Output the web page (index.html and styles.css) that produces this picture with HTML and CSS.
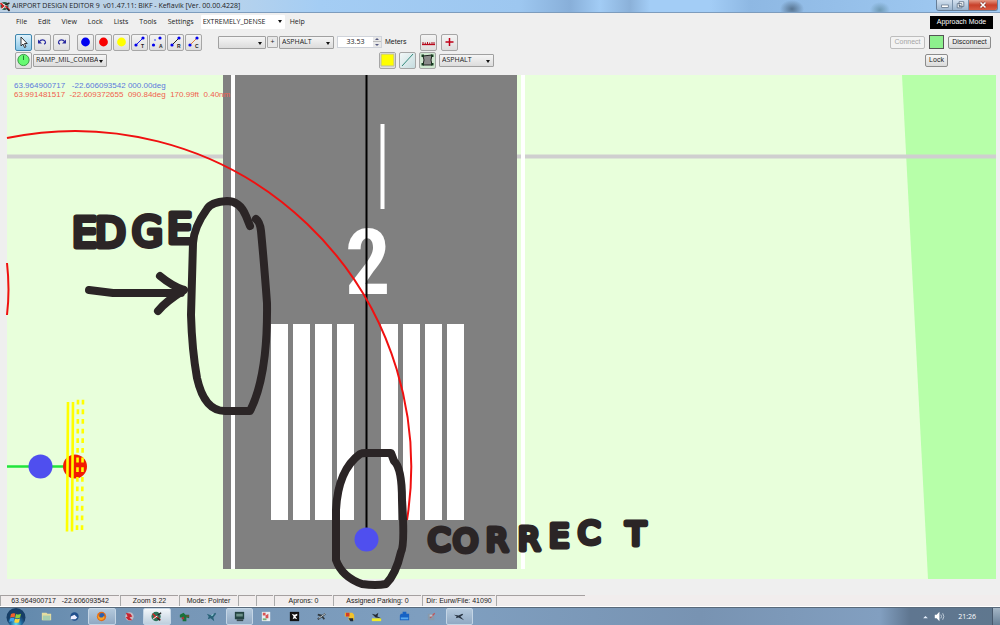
FILE: index.html
```html
<!DOCTYPE html>
<html lang="en">
<head>
<meta charset="utf-8">
<title>Airport Design Editor 9</title>
<link rel="stylesheet" href="styles.css">
</head>
<body>
<header class="titlebar">
  <svg class="app-icon" viewBox="0 0 11 11"><circle cx="4" cy="5" r="4" fill="#2b5d49"/><path d="M0 2l4 2 3 5M1 8l8-6" stroke="#fff" stroke-width="1.2"/><path d="M0 2l3 3-2 2M5 5l4 4" stroke="#d22" stroke-width="1.6" fill="none"/><path d="M5 4l4-2M6 7l3 3" stroke="#222" stroke-width="1.5"/></svg>
  <h1 class="title">AIRPORT DESIGN EDITOR 9 &nbsp;v01.47.11: BIKF - Keflavik [Ver. 00.00.4228]</h1>
  <div class="window-buttons">
    <button class="win" aria-label="Minimize"><svg viewBox="0 0 16 10"><rect x="5" y="5" width="7" height="2.500" fill="#fff" stroke="#52647a" stroke-width=".7"/></svg></button>
    <button class="win" aria-label="Restore"><svg viewBox="0 0 16 10"><path d="M6.500 1.500h5v5h-5zM4.500 3.500h5v4.500h-5z" fill="#fff" stroke="#52647a" stroke-width=".8"/><path d="M6.500 5h1.500v1.500H6.500z" fill="#52647a"/></svg></button>
    <button class="win close" aria-label="Close"><svg viewBox="0 0 16 10"><path d="M5.500 2.500l5 5m0-5l-5 5" stroke="#7a2a20" stroke-width="2.600"/><path d="M5.500 2.500l5 5m0-5l-5 5" stroke="#fff" stroke-width="1.600"/></svg></button>
  </div>
</header>

<nav class="menubar">
  <button class="menu">File</button>
  <button class="menu">Edit</button>
  <button class="menu">View</button>
  <button class="menu">Lock</button>
  <button class="menu">Lists</button>
  <button class="menu">Tools</button>
  <button class="menu">Settings</button>
  <span class="drop density"><select aria-label="Scenery density"><option>EXTREMELY_DENSE</option></select></span>
  <button class="menu help">Help</button>
  <button class="approach">Approach Mode</button>
</nav>

<section class="toolbar">
  <div class="row">
    <div class="group tools">
      <button class="tool active" aria-label="Pointer"><svg viewBox="0 0 17 18"><path d="M6 4v9l2-2 1.500 3.500 1.500-.7-1.500-3.300h2.700z" fill="#fff" stroke="#222" stroke-width=".9"/></svg></button>
      <button class="tool" aria-label="Undo"><svg viewBox="0 0 17 18"><path d="M5 9c2-3 6-2.500 6.500 0 .2 1.200-.7 2-1.500 2.200" fill="none" stroke="#2a2aa0" stroke-width="1.200"/><path d="M4 6.500v4h4z" fill="#2a2aa0"/></svg></button>
      <button class="tool" aria-label="Redo"><svg viewBox="0 0 17 18"><path d="M12 9c-2-3-6-2.500-6.500 0-.2 1.200.7 2 1.500 2.200" fill="none" stroke="#2a2aa0" stroke-width="1.200"/><path d="M13 6.500v4H9z" fill="#2a2aa0"/></svg></button>
    </div>
    <div class="group nodes">
      <button class="tool" aria-label="Blue node"><svg viewBox="0 0 17 18"><circle cx="8.500" cy="9" r="4.400" fill="#0000f0"/></svg></button>
      <button class="tool" aria-label="Red node"><svg viewBox="0 0 17 18"><circle cx="8.500" cy="9" r="4.400" fill="#f80000"/></svg></button>
      <button class="tool" aria-label="Yellow node"><svg viewBox="0 0 17 18"><circle cx="8.500" cy="9" r="4.400" fill="#ff0"/></svg></button>
      <button class="tool" aria-label="Taxi link"><svg viewBox="0 0 17 18"><path d="M5 12l7-7" stroke="#2222e0"/><g fill="#00e"><circle cx="5" cy="12" r="1.600"/><circle cx="12" cy="5" r="1.600"/></g><text class="tag" x="10" y="15">T</text></svg></button>
      <button class="tool" aria-label="Apron link"><svg viewBox="0 0 17 18"><g fill="#00e"><circle cx="4.500" cy="12" r="1.600"/><circle cx="11" cy="5" r="1.600"/><circle cx="6" cy="7" r=".7"/></g><text class="tag" x="10" y="15">A</text></svg></button>
      <button class="tool" aria-label="Runway link"><svg viewBox="0 0 17 18"><path d="M5 12l7-7" stroke="#222"/><g fill="#00e"><circle cx="5" cy="12" r="1.600"/><circle cx="12" cy="5" r="1.600"/></g><text class="tag" x="10" y="15">R</text></svg></button>
      <button class="tool" aria-label="Closed link"><svg viewBox="0 0 17 18"><path d="M5 12l7-7" stroke="#e08040"/><g fill="#00e"><circle cx="5" cy="12" r="1.600"/><circle cx="12" cy="5" r="1.600"/></g><text class="tag" x="10" y="15">C</text></svg></button>
    </div>
    <div class="group surface">
      <span class="drop blank"><select aria-label="Taxiway name"><option></option></select></span>
      <button class="add" aria-label="Add name">+</button>
      <span class="drop"><select aria-label="Surface"><option>ASPHALT</option></select></span>
    </div>
    <label class="width"><span class="spin"><input type="text" value="33.53"><i class="arrows"></i></span>Meters</label>
    <div class="group marks">
      <button class="tool" aria-label="Fence"><svg viewBox="0 0 17 18"><path d="M2 11.500h13" stroke="#c00018" stroke-width="1.300"/><path d="M3 9v3M5.300 9.500v2.500M7.500 9v3M9.700 9.500v2.500M12 9v3M14 9v3" stroke="#b01020"/></svg></button>
      <button class="tool" aria-label="Add mark"><svg viewBox="0 0 17 18"><path d="M8.500 5v8M4.500 9h8" stroke="#c00018" stroke-width="1.500"/></svg></button>
    </div>
    <div class="group link">
      <button class="push off" disabled>Connect</button>
      <span class="lamp"></span>
      <button class="push wide">Disconnect</button>
    </div>
  </div>
  <div class="row second">
    <div class="group parking">
      <button class="tool" aria-label="Parking"><svg viewBox="0 0 17 18"><circle cx="8.500" cy="9" r="5.600" fill="#66fa72" stroke="#3b9b47"/><path d="M8.500 9V4.500" stroke="#268034"/></svg></button>
      <span class="drop ramp"><select aria-label="Parking type"><option>RAMP_MIL_COMBAT</option></select></span>
    </div>
    <div class="group apron">
      <button class="tool" aria-label="Apron colour"><svg viewBox="0 0 17 18"><path d="M2 3h13v12H2z" fill="#ff0" stroke="#bba"/></svg></button>
      <button class="tool tint" aria-label="Line"><svg viewBox="0 0 17 18"><path d="M3 15L14 3" stroke="#338a7c"/></svg></button>
      <button class="tool green" aria-label="Polygon"><svg viewBox="0 0 17 18"><path d="M4 5l9-1-1 5 1 5H4l1-5z" fill="#8a8a8a" stroke="#222"/><path d="M2.500 3.500h2.500v2.500H2.500zM12 3.500h2.500v2.500h-2.500zM2.500 12h2.500v2.500H2.500zM12 12h2.500v2.500h-2.500z" fill="#173c20"/></svg></button>
      <span class="drop"><select aria-label="Apron surface"><option>ASPHALT</option></select></span>
    </div>
    <button class="push lock">Lock</button>
  </div>
</section>

<main class="view">
  <svg class="map" viewBox="7 75 989 504" preserveAspectRatio="xMinYMin slice">
    <rect x="7" y="75" width="989" height="504" fill="#e8ffdb"/>
    <path d="M902 75h94v504h-68z" fill="#b7ffa9"/>
    <path d="M7 156.500h989" stroke="#cfcfcf" stroke-width="4"/>
    <path d="M223 75h294v494H223z" fill="#808080"/>
    <path d="M231 75h4v494h-4zM521 75h4v494h-4zM380.500 124h4v85h-4z" fill="#fff"/>
    <path d="M271 324h17v196h-17zM293 324h17v196h-17zM315 324h17v196h-17zM337 324h17v196h-17zM381 324h17v196h-17zM403 324h17v196h-17zM425 324h17v196h-17zM447 324h17v196h-17z" fill="#fff"/>
    <text class="number" x="345" y="294">2</text>
    <path d="M366.500 75v455" stroke="#000" stroke-width="2"/>
    <path d="M7 138A336 336 0 0 1 407 520M7 263Q10 290 7 315" fill="none" stroke="#f01010" stroke-width="2"/>
    <path d="M7 466.500h60" stroke="#1fe53b" stroke-width="2.500"/>
    <circle cx="40.500" cy="466.500" r="12" fill="#4f4fef"/>
    <circle cx="75" cy="466.500" r="12" fill="#f21c00"/>
    <path d="M68 402l-1 129.500M73 402l-1 129.500" stroke="#ff0" stroke-width="2.600"/>
    <path d="M78 399.700l-1 131.500M83 399.700l-1 131.500" stroke="#ff0" stroke-width="2.600" stroke-dasharray="4.800 4.850"/>
    <circle cx="366.500" cy="539.500" r="12" fill="#4f4fef"/>
    <text class="coords here" x="14" y="88">63.964900717 &#160; -22.606093542 000.00deg</text>
    <text class="coords there" x="14" y="97">63.991481517 &#160;-22.609372655 &#160;090.84deg &#160;170.99ft &#160;0.40nm</text>
    <g class="pen">
      <path d="M250 226L246 216Q240 201 227 201Q211 202 207 209Q194 227 193 243L191 315Q192 350 197 378C201 396 209 411 225 411H250Q268 376 267 303Q264 262 261 231Q260 222 256 219"/>
      <path d="M89 290L113 293H181M160 276Q172 286 184 290M184 290Q165 302 158 311"/>
      <path d="M366 453H391L394 461Q402 468 402 500Q405 545 401 552Q396 574 386 584Q376 586 362 584Q342 577 336 560V510Q338 470 360 454Q362 453 366 453"/>
    </g>
    <text class="scrawl large" x="72 95 132 167" y="247 247 246 243">EDGE</text>
    <text class="scrawl" x="428 453 486 518 549 578 626" y="551 552 551 550 547 544 545">CORRECT</text>
  </svg>
</main>

<footer class="status">
  <span class="cell pos">63.964900717 &nbsp; -22.606093542</span>
  <span class="cell mid">Zoom 8.22</span>
  <span class="cell mid">Mode: Pointer</span>
  <span class="cell tiny"></span>
  <span class="cell tiny"></span>
  <span class="cell mid">Aprons: 0</span>
  <span class="cell park">Assigned Parking: 0</span>
  <span class="cell dir">Dir: Eurw/File: 41090</span>
  <span class="cell last"></span>
</footer>

<nav class="taskbar">
  <button class="start" aria-label="Start"><svg viewBox="0 0 22 18"><defs><radialGradient id="orb" cy=".85"><stop offset="0" stop-color="#5fe0f5"/><stop offset=".6" stop-color="#20699e"/><stop offset="1" stop-color="#163e66"/></radialGradient></defs><circle cx="11" cy="9.500" r="9.500" fill="url(#orb)"/><path d="M6 6q2-1.500 4.300-.4l-.8 3.800q-2.200-1-4.400.3z" fill="#f0602a"/><path d="M11 6q2.500 1.200 5-.2l-.9 3.800q-2.400 1.300-4.900.2z" fill="#8fcf3c"/><path d="M5 10.500q2-1.300 4.300-.2l-.8 3.500q-2-1-4.300.2z" fill="#3ba6ee"/><path d="M10 10.800q2.500 1 4.900-.2l-.9 3.600q-2.200 1.200-4.800.1z" fill="#fcd337"/></svg></button>
  <div class="tasks">
    <button class="task" aria-label="Explorer"><svg viewBox="0 0 14 14"><path d="M2 3h5l1 1h4v7H2z" fill="#e5dda0"/><path d="M3 6h8v5H3z" fill="#a8cfb0"/></svg></button>
    <button class="task" aria-label="Mail"><svg viewBox="0 0 14 14"><circle cx="7" cy="7" r="4.500" fill="#214f8c"/><path d="M3 7l4-2 3 3-2 2H3z" fill="#eef"/></svg></button>
    <button class="task open" aria-label="Browser"><svg viewBox="0 0 14 14"><circle cx="7" cy="7" r="5" fill="#e46b15"/><circle cx="7.500" cy="6" r="2.800" fill="#2c5fb0"/><path d="M3 4q1 5 5 4l2-2q1 5-4 5-4-2-3-7" fill="#f7a124"/></svg></button>
    <button class="task" aria-label="Red app"><svg viewBox="0 0 14 14"><circle cx="7" cy="7" r="4.500" fill="#c9b9c1"/><path d="M3 3l5 1 2 3-3 1 3 3H6L3 8l2-1z" fill="#c82430"/></svg></button>
    <button class="task open bright" aria-label="Airport Design Editor"><svg viewBox="0 0 14 14"><circle cx="6.500" cy="7" r="5" fill="#2b7257"/><path d="M3 4l3 3-2 2M7 7l4 4" stroke="#d22" stroke-width="1.500" fill="none"/><path d="M3 10l8-6" stroke="#fff"/><path d="M8 6l4-3M8 9l3 2" stroke="#222" stroke-width="1.500"/></svg></button>
    <button class="task" aria-label="Green app"><svg viewBox="0 0 14 14"><path d="M2 5l4-2 2 2h4v4L9 8v4H5V8H2z" fill="#18713a"/><path d="M4 8l2-1 1 3H4zM9 6h3v1H9z" fill="#a33"/></svg></button>
    <button class="task" aria-label="Plane app"><svg viewBox="0 0 14 14"><path d="M2 4l5 2 4-3 1 1-3 4 1 4-4-3-3 1 1-3z" fill="#2a6378"/><path d="M7 6l2-1" stroke="#bff"/></svg></button>
    <button class="task open" aria-label="Monitor app"><svg viewBox="0 0 14 14"><path d="M2 2h10v8H2z" fill="#244442"/><path d="M3.500 4h7v3h-7z" fill="#6c9188"/><path d="M4 10h7v2H4z" fill="#37474c"/></svg></button>
    <button class="task" aria-label="Chart app"><svg viewBox="0 0 14 14"><path d="M2 2h9v10H2z" fill="#e8ecef"/><path d="M3 3h3v3H3zM6 6l3-2v5H6z" fill="#d85252"/><path d="M3 9h4v2H3z" fill="#79b279"/></svg></button>
    <button class="task" aria-label="Black app"><svg viewBox="0 0 14 14"><path d="M2 2h10v10H2z" fill="#111"/><path d="M4 4l3 1 3-1v2L8 7l2 3-3-1-2 1 1-3z" fill="#fff"/></svg></button>
    <button class="task" aria-label="Wrench"><svg viewBox="0 0 14 14"><path d="M3 10l8-6M3 5l4 1 3 4" stroke="#2f373d" stroke-width="1.800" fill="none"/><path d="M4 9l7-5" stroke="#d4dade"/></svg></button>
    <button class="task" aria-label="Yellow app"><svg viewBox="0 0 14 14"><path d="M2 3h8l2 2v6H6V7H2z" fill="#f2c22b"/><path d="M3 3h4v4H3z" fill="#d23b26"/><path d="M6 9h5v3H8z" fill="#202a38"/></svg></button>
    <button class="task" aria-label="Flight plan app"><svg viewBox="0 0 14 14"><path d="M2 9h10v3H2z" fill="#f1ed27"/><path d="M2 4l4 1 3-2-1 4 4 2-6-1z" fill="#252b33"/></svg></button>
    <button class="task" aria-label="Blue app"><svg viewBox="0 0 14 14"><path d="M3 4h2V2h4v2h3v7H2V6z" fill="#1762c4"/><path d="M3 8h8v2H3z" fill="#58a9ef"/></svg></button>
    <button class="task" aria-label="Note app"><svg viewBox="0 0 14 14"><path d="M3 4h7v7H3z" fill="#8899aa"/><path d="M5 8l5-5 1 1-5 5z" fill="#c35358"/><path d="M5 5h3v2H5z" fill="#b9c4d0"/></svg></button>
    <button class="task open" aria-label="Flight app"><svg viewBox="0 0 14 14"><path d="M1 5l5 1 4-2 1 1-3 2 4 4-6-3-3 1 1-2z" fill="#283442"/></svg></button>
  </div>
  <div class="tray">
    <svg class="tray-icon" viewBox="0 0 14 14"><path d="M4.500 9h5L7 6.500z" fill="#e8f2ff"/></svg>
    <svg class="tray-icon" viewBox="0 0 14 14"><path d="M3 5h2l3-3v10L5 9H3z" fill="#fff"/><path d="M9.500 5q1.500 2 0 4M11.500 3.500q2.500 3.500 0 7" stroke="#c5d2dd" fill="none"/></svg>
    <time class="clock">21:26</time>
    <span class="peek"></span>
  </div>
</nav>
</body>
</html>
```
FILE: styles.css
```css
* { box-sizing: border-box; }
body {
  margin: 0;
  min-height: 100vh;
  display: flex;
  flex-direction: column;
  background: #efefef;
  color: #1b1b1b;
  font: 7px/10px "Open Sans", sans-serif;
}
button, input, select { font: inherit; color: inherit; margin: 0; padding: 0; border: 0; background: none; }
button { display: flex; align-items: center; justify-content: center; white-space: nowrap; }
svg { display: block; }

.titlebar {
  display: flex;
  align-items: center;
  height: 13px;
  padding-right: 2px;
  border-bottom: 1px solid #7d9cbd;
  background:
    radial-gradient(ellipse 12px 9px at 792px 9px, #587592, transparent),
    radial-gradient(ellipse 10px 8px at 880px 10px, #6f9ab5, transparent),
    linear-gradient(90deg, #bcd0e3 0, #b9d3eb 22%, #a4cdf4 32%, #9dc7f0 52%, #88afd9 57%, #a2ccf5 60%, #8bb1d9 63%, #a3cdf6 65%, #a3cdf6 71%, #8eb8e3 75%, #a2ccf4 100%);
}
.app-icon { width: 12px; height: 11px; }
.title { margin: 0; flex: 1; font: inherit; }
.window-buttons { display: flex; align-self: flex-start; border: 1px solid #667d96; border-top: 0; border-radius: 0 0 3px 3px; overflow: hidden; }
.win { width: 16px; height: 10px; background: linear-gradient(#d3e1ef, #9cb5ce); border-right: 1px solid #7890a8; }
.win svg { width: 16px; height: 10px; }
.close { width: 28px; border: 0; background: linear-gradient(#e49a86, #c8402a 50%, #d85c44); }

.menubar { display: flex; align-items: center; height: 18px; padding: 0 7px 0 16px; }
.menu { margin-right: 11px; }
.menubar .density { margin-left: -4px; width: 84px; height: 14px; border: 0; background: #fff; }
.density select { padding-left: 2px; }
.help { margin-left: 5px; }
.approach { margin-left: auto; width: 63px; height: 13px; background: #000; color: #fff; font: 7px/10px "Liberation Sans", sans-serif; }

.toolbar { padding: 2px 9px 6px 15px; }
.row { display: flex; align-items: center; height: 18px; }
.group { display: flex; align-items: center; gap: 1px; }
.tool { width: 17px; height: 17px; border: 1px solid #a6a6a6; border-radius: 2px; background: linear-gradient(#f4f4f4, #dedede); }
.tool svg { width: 17px; height: 18px; flex: none; }
.active { border-color: #3e86ae; background: linear-gradient(#dff2fc, #8cc8e8); }
.tint { background: linear-gradient(135deg, #f2f8f8, #c5dcdf); }
.green { background: #cfe8d0; }
.tag { font: bold 5px "Liberation Sans", sans-serif; fill: #222; }
.tools { gap: 2px; }
.nodes { margin-left: 7px; }
.surface { margin-left: 16px; gap: 1px; }
.drop { position: relative; display: block; width: 55px; height: 13px; border: 1px solid #a0a0a0; border-radius: 1px; background: linear-gradient(#f5f5f5, #dcdcdc); }
.drop::after { content: ""; position: absolute; right: 3px; top: 5px; border: 2px solid transparent; border-top: 3px solid #111; pointer-events: none; }
.drop select { appearance: none; display: block; width: 100%; height: 100%; padding: 0 8px 0 2px; line-height: 10px; }
.blank { width: 48px; }
.add { width: 11px; height: 12px; border: 1px solid #aaa; border-radius: 1px; background: #e8e8e8; }
.width { display: flex; align-items: center; gap: 3px; margin-left: 3px; font: 7px/10px "Liberation Sans", sans-serif; }
.spin { display: flex; width: 45px; height: 12px; border: 1px solid #cfd3da; background: #fff; }
.spin input { flex: 1; min-width: 0; text-align: center; font: 7px/10px "Open Sans", sans-serif; }
.arrows { width: 8px; background: linear-gradient(#e8e8e8 45%, #bbb 45%, #bbb 55%, #e8e8e8 55%); position: relative; }
.arrows::before, .arrows::after { content: ""; position: absolute; left: 2px; border: 2px solid transparent; }
.arrows::before { top: -1px; border-bottom-color: #555a80; }
.arrows::after { bottom: -1px; border-top-color: #555a80; }
.marks { margin-left: 14px; gap: 4px; }
.link { margin-left: auto; gap: 4px; }
.push { width: 35px; height: 13px; border: 1px solid #8c8c8c; border-radius: 2px; background: linear-gradient(#f7f7f7, #dadada); font: 7px/10px "Liberation Sans", sans-serif; }
.off { color: #a5a5a5; border-color: #bdbdbd; background: #f3f3f3; }
.wide { width: 43px; }
.lamp { width: 15px; height: 14px; border: 1px solid #555; background: #8df08d; }
.parking { gap: 1px; }
.ramp { width: 74px; }
.apron { margin-left: 272px; gap: 3px; }
.lock { width: 23px; margin-left: auto; margin-right: 43px; }

.view { flex: 1; display: flex; min-height: 0; padding: 0 4px 0 7px; }
.map { flex: 1; min-width: 0; aspect-ratio: 989 / 504; overflow: visible; }
.coords { font: 8px "Liberation Sans", sans-serif; }
.here { fill: #5b79dc; }
.there { fill: #f1614e; }
.number { font: bold 90px "Liberation Sans Narrow", "Arial Narrow", "Roboto Condensed", "Open Sans Condensed", sans-serif; fill: #fff; }
.pen { fill: none; stroke: #2b2526; stroke-width: 8; stroke-linecap: round; stroke-linejoin: round; }
.scrawl { font: 32px "DejaVu Sans", sans-serif; fill: #2b2526; stroke: #2b2526; stroke-width: 5; stroke-linejoin: round; }
.large { font-size: 40px; }

.status { display: flex; height: 12px; margin-top: 16px; background: #f1eded; font: 7px/10px "Liberation Sans", sans-serif; border-bottom: 1px solid #fff; }
.cell { border-top: 1px solid #a5a0a0; border-left: 1px solid #aaa; margin-right: 1px; text-align: center; white-space: nowrap; }
.pos { width: 119px; }
.mid { width: 58px; }
.tiny { width: 17px; }
.park { width: 88px; }
.dir { width: 73px; }
.last { width: 89px; }

.taskbar { display: flex; align-items: stretch; height: 18px; border-top: 1px solid #59697a; background: linear-gradient(90deg, #5f87ab 0, #7595b5 12%, #7f9fc0 45%, #7893b2 70%, #829fc0 88%, #5f7690 91%, #5f778e 100%); }
.start { width: 22px; margin-left: 5px; margin-right: 6px; }
.start svg { width: 22px; height: 18px; }
.tasks { display: flex; width: 440px; }
.task { flex: 1; border: 1px solid transparent; }
.task svg { width: 13px; height: 13px; }
.open { border-color: #c4d5e5; border-radius: 2px; background: linear-gradient(#b3c8dc, #90a9c3); }
.bright { background: linear-gradient(#f2f6fa, #bfd0de); }
.tray { margin-left: auto; display: flex; align-items: center; color: #fff; }
.tray-icon { width: 13px; height: 13px; margin-right: 0; }
.clock { margin: 0 16px 0 13px; }
.peek { width: 8px; height: 100%; border-left: 1px solid #48596d; background: linear-gradient(#a5b6c6, #667f96); }
```
